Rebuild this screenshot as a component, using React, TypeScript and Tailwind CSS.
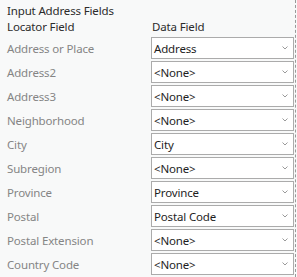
import React from 'react';

const rows: [string, string][] = [
  ['Address or Place', 'Address'],
  ['Address2', '<None>'],
  ['Address3', '<None>'],
  ['Neighborhood', '<None>'],
  ['City', 'City'],
  ['Subregion', '<None>'],
  ['Province', 'Province'],
  ['Postal', 'Postal Code'],
  ['Postal Extension', '<None>'],
  ['Country Code', '<None>'],
];

const Chevron = () => (
  <svg width="6" height="4" viewBox="0 0 6 4" className="shrink-0">
    <path d="M0.5 0.5 L3 3 L5.5 0.5" fill="none" stroke="#9a9a9a" strokeWidth="1" />
  </svg>
);

const App = () => {
  return (
    <div
      className="relative w-[297px] h-[277px] overflow-hidden bg-[#f8f9f9] text-[11.5px] leading-[15px] tracking-[-0.15px]"
      style={{ fontFamily: '"Noto Sans", "Segoe UI", sans-serif' }}
    >
      <div className="pl-[7px] pt-[3px]">
        <div className="text-[#2b2b2b]">Input Address Fields</div>
        <div className="grid grid-cols-[144px_143px] mt-[1px]">
          <div className="text-[#2b2b2b]">Locator Field</div>
          <div className="text-[#2b2b2b] pl-[1px]">Data Field</div>
        </div>
        <div className="flex flex-col gap-[2px] mt-[3px]">
          {rows.map(([label, value]) => (
            <div key={label} className="grid grid-cols-[144px_143px] items-center h-[22px]">
              <div className="text-[#858585]">{label}</div>
              <div className="flex items-center justify-between h-full border border-[#ababab] bg-white pl-[2px] pr-[5px] text-[#1e1e1e]">
                <span>{value}</span>
                <Chevron />
              </div>
            </div>
          ))}
        </div>
      </div>
      <div className="absolute top-0 right-[1px] h-full border-r border-dashed border-[#9a9a9a]" />
    </div>
  );
};

export default App;
